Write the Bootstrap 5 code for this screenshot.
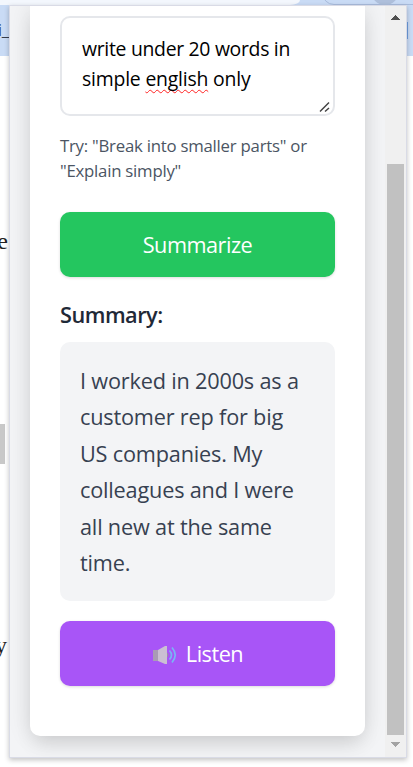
<!DOCTYPE html>
<html lang="en">
<head>
<meta charset="utf-8">
<meta name="viewport" content="width=device-width, initial-scale=1">
<title>Summarizer</title>
<link href="https://cdn.jsdelivr.net/npm/bootstrap@5.3.0/dist/css/bootstrap.min.css" rel="stylesheet">
<style>
html, body { height: 100%; }
body { font-family: "Segoe UI", "Open Sans", "Noto Sans", sans-serif; background: #fff; }
.page-view { width: 413px; height: 767px; }
.browser-top { height: 56px; background: #c9dbf5; }
.address { width: 300px; height: 5px; background: #f3f7fd; border-bottom-right-radius: 12px 6px; }
.omni { left: 322px; top: -20px; width: 110px; height: 25px; border: 1px solid #a9bcdc; border-radius: 12px; }
.avatar { left: 371px; top: -23px; width: 28px; height: 28px; background: #aebfdb; }
.blue-edge { left: 407px; top: 22px; width: 1px; height: 17px; background: #6f9fe0; }
.bit { color: #222; white-space: nowrap; line-height: 24px; }
.bit-tab { right: 404px; top: 18px; font-size: 17px; color: #353d4c; letter-spacing: -.3px; }
.bit-e { right: 405px; top: 229px; font: 24px/24px "Liberation Serif", serif; }
.bit-y { right: 406px; top: 633px; font: 24px/24px "Liberation Serif", serif; }
.bit-bar { left: 0; top: 424px; width: 5px; height: 40px; background: #c8c8c8; }
.popup { left: 9px; top: 5px; width: 398px; height: 753px; border: 1px solid #d9dbe6; background: #f3f4f6; box-shadow: 0 2px 5px rgba(0,0,0,.24); }
.view { background: #f3f4f6; }
.panel { margin: 0 20px; height: 730px; padding: 10px 30px 0; background: #fff; border-radius: 0 0 10px 10px; box-shadow: 0 12px 19px -4px rgba(0,0,0,.1), 0 0 24px rgba(0,0,0,.11); }
.prompt-box { height: 100px; border: 2px solid #e5e7eb; border-radius: 10px; padding: 16px 20px; font-size: 19.4px; line-height: 30px; color: #000; white-space: nowrap; }
.grip { right: 2px; bottom: 1px; }
.misspelt { text-decoration: underline wavy #f22; text-decoration-thickness: 1px; text-underline-offset: 3px; text-decoration-skip-ink: none; }
.hint { margin-top: 17px; font-size: 16.8px; line-height: 25px; color: #4b5563; white-space: nowrap; }
.action { height: 65px; border: 0; border-radius: 10px; padding-top: 8px; color: #fff; font-size: 21.7px; box-shadow: 0 1px 3px rgba(0,0,0,.14); }
.action-green, .action-green:hover { background: #24c65f; color: #fff; margin-top: 29px; }
.action-purple, .action-purple:hover { background: #a855f7; color: #fff; margin-top: 20px; }
.summary-title { margin: 20px 0 10px; font-size: 21.7px; line-height: 35px; font-weight: 600; color: #1f2937; }
.summary-text { height: 259px; padding: 20.6px 20px 19px; background: #f3f4f6; border-radius: 10px; font-size: 21.7px; line-height: 36.5px; letter-spacing: -.19px; color: #374151; white-space: nowrap; }
.track { width: 21px; background: #f0f0f0; }
.track svg { display: block; }
.thumb { width: 17px; height: 571px; margin: 0 auto 0 2px; background: #c1c1c1; }
.line-tight { letter-spacing: -.3px; }
.line-snug { letter-spacing: -.2px; }
.hint { letter-spacing: -.24px; }
.label-tight { letter-spacing: -.5px; }
</style>
</head>
<body>
<div class="page-view position-relative overflow-hidden">
  <div class="browser-top"><div class="address"></div></div>
  <div class="omni position-absolute"></div>
  <div class="avatar position-absolute rounded-circle"></div>
  <div class="blue-edge position-absolute"></div>
  <div class="bit bit-tab position-absolute">ri_</div>
  <div class="bit bit-e position-absolute">e</div>
  <div class="bit-bar position-absolute"></div>
  <div class="bit bit-y position-absolute">y</div>

  <div class="popup position-absolute d-flex">
    <main class="view flex-grow-1 overflow-hidden">
      <section class="panel">
        <div class="prompt-box position-relative">
          <span class="line-tight">write under 20 words in</span><br>
          <span class="line-snug">simple <span class="misspelt">english</span> only</span>
          <svg class="grip position-absolute" width="12" height="12" viewBox="0 0 12 12" fill="none" stroke="#444" stroke-width="1.5"><path d="M1 10.5 10 1.5M6 10.5 10 7"/></svg>
        </div>
        <div class="hint">Try: "Break into smaller parts" or<br>"Explain simply"</div>
        <button type="button" class="btn action action-green w-100 d-flex align-items-center justify-content-center"><span class="label-tight">Summarize</span></button>
        <h2 class="summary-title label-tight">Summary:</h2>
        <div class="summary-text">
          I worked in 2000s as a<br>
          customer rep for big<br>
          US companies. My<br>
          colleagues and I were<br>
          all new at the same<br>
          time.
        </div>
        <button type="button" class="btn action action-purple w-100 d-flex align-items-center justify-content-center">
          <svg class="me-2" width="26" height="22" viewBox="0 0 26 22"><path d="M1 6h5v11H1z" fill="#a99bb5"/><path d="M6 6 13 2h2v18h-2l-7-3z" fill="#cbbfd3"/><path d="M15 8.5a3 3 0 0 1 0 5z" fill="#9a8ca8"/><g fill="none" stroke="#79b5f5" stroke-width="1.7"><path d="M17.5 6.5q4 4.5 0 9"/><path d="M20 3.5q6.5 7.500 0 15"/></g></svg>
          <span class="label-tight">Listen</span>
        </button>
      </section>
    </main>
    <aside class="track flex-shrink-0">
      <svg width="20" height="158" viewBox="0 0 20 158"><path d="M6 14h9v-1h-1v-1h-1v-1h-1v-1h-1V9h-1v1H9v1H8v1H7v1H6z" fill="#505050"/></svg>
      <div class="thumb"></div>
      <svg width="20" height="22" viewBox="0 0 20 22"><path d="M6 7h9v1h-1v1h-1v1h-1v1h-1v1h-1v-1H9v-1H8V9H7V8H6z" fill="#a3a3a3"/></svg>
    </aside>
  </div>
</div>
<script src="https://cdn.jsdelivr.net/npm/bootstrap@5.3.0/dist/js/bootstrap.bundle.min.js"></script>
</body>
</html>
